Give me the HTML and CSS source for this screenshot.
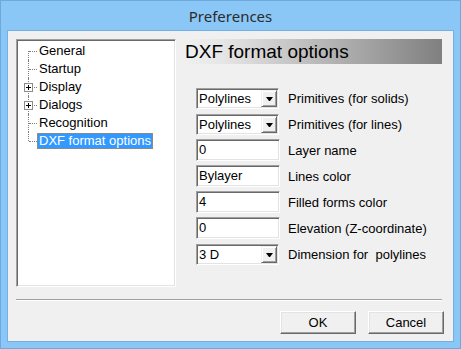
FILE: index.html
```html
<!DOCTYPE html>
<html>
<head>
<meta charset="utf-8">
<title>Preferences</title>
<link rel="stylesheet" href="styles.css">
</head>
<body>
<div class="window">
  <div class="titlebar">Preferences</div>
  <div class="client">
    <div class="main">
      <div class="tree">
        <ul>
          <li class="first"><span class="label">General</span></li>
          <li><span class="label">Startup</span></li>
          <li><span class="expander"></span><span class="label">Display</span></li>
          <li><span class="expander"></span><span class="label">Dialogs</span></li>
          <li><span class="label">Recognition</span></li>
          <li class="last"><span class="label selected">DXF format options</span></li>
        </ul>
      </div>
      <div class="panel">
        <div class="header">DXF format options</div>
        <div class="form">
          <div class="row">
            <div class="control"><div class="combo"><span class="value">Polylines</span><span class="drop"></span></div></div>
            <span class="caption">Primitives (for solids)</span>
          </div>
          <div class="row">
            <div class="control"><div class="combo"><span class="value">Polylines</span><span class="drop"></span></div></div>
            <span class="caption">Primitives (for lines)</span>
          </div>
          <div class="row">
            <div class="control"><div class="field">0</div></div>
            <span class="caption">Layer name</span>
          </div>
          <div class="row">
            <div class="control"><div class="field">Bylayer</div></div>
            <span class="caption">Lines color</span>
          </div>
          <div class="row">
            <div class="control"><div class="field">4</div></div>
            <span class="caption">Filled forms color</span>
          </div>
          <div class="row">
            <div class="control"><div class="field">0</div></div>
            <span class="caption">Elevation (Z-coordinate)</span>
          </div>
          <div class="row">
            <div class="control"><div class="combo"><span class="value">3 D</span><span class="drop"></span></div></div>
            <span class="caption">Dimension for&nbsp; polylines</span>
          </div>
        </div>
      </div>
    </div>
    <div class="separator"></div>
    <div class="buttons">
      <button class="btn">OK</button>
      <button class="btn">Cancel</button>
    </div>
  </div>
</div>
</body>
</html>
```

FILE: styles.css
```css
html, body {
  margin: 0;
  padding: 0;
}
body {
  width: 461px;
  height: 349px;
  overflow: hidden;
  background: #8ac7f7;
  font-family: "Liberation Sans", Arial, sans-serif;
  font-size: 13px;
  color: #000;
}
.window {
  box-sizing: border-box;
  width: 461px;
  height: 349px;
  border: 1px solid #6fa8dc;
  display: flex;
  flex-direction: column;
}
.titlebar {
  height: 29px;
  display: flex;
  align-items: center;
  justify-content: center;
  font-family: "Noto Sans", "Open Sans", sans-serif;
  font-size: 15px;
  color: #2b2b2b;
}
.client {
  flex: 1;
  margin: 0 6px 6px 6px;
  border: 1px solid #74b0e6;
  background: #f0f0f0;
  display: flex;
  flex-direction: column;
  padding: 8px 9px 0 8px;
}
.main {
  display: flex;
  gap: 7px;
}
.tree {
  box-sizing: border-box;
  width: 160px;
  height: 248px;
  background: #fff;
  border: 1px solid;
  border-color: #a0a0a0 #fff #fff #a0a0a0;
  box-shadow: inset 1px 1px #696969, inset -1px -1px #e3e3e3;
}
.tree ul {
  list-style: none;
  margin: 0;
  padding: 2px 0 0 0;
}
.tree li {
  position: relative;
  height: 18px;
  padding-left: 20px;
}
.tree li::before {
  content: "";
  position: absolute;
  left: 11px;
  top: 0;
  height: 18px;
  border-left: 1px dotted #808080;
}
.tree li.first::before {
  top: 9px;
  height: 9px;
}
.tree li.last::before {
  height: 9px;
}
.tree li::after {
  content: "";
  position: absolute;
  left: 12px;
  top: 9px;
  width: 8px;
  border-top: 1px dotted #808080;
}
.expander {
  position: absolute;
  left: 7px;
  top: 5px;
  box-sizing: border-box;
  width: 9px;
  height: 9px;
  border: 1px solid #8c8c8c;
  background: #fff;
  z-index: 1;
}
.expander::before {
  content: "";
  position: absolute;
  left: 1px;
  top: 3px;
  width: 5px;
  height: 1px;
  background: #000;
}
.expander::after {
  content: "";
  position: absolute;
  left: 3px;
  top: 1px;
  width: 1px;
  height: 5px;
  background: #000;
}
.label {
  display: inline-block;
  height: 16px;
  line-height: 16px;
  margin-top: 1px;
  padding: 0 2px;
  white-space: nowrap;
}
.label.selected {
  background: #3399ff;
  color: #fff;
  outline: 1px dotted #d08020;
  outline-offset: -1px;
}
.panel {
  width: 259px;
  display: flex;
  flex-direction: column;
}
.header {
  height: 25px;
  line-height: 25px;
  padding-left: 2px;
  font-size: 19px;
  background: linear-gradient(to right, #f0f0f0, #e6e6e6 15%, #808080);
}
.form {
  margin-top: 23px;
  padding-left: 13px;
  display: flex;
  flex-direction: column;
  gap: 4px;
}
.row {
  display: flex;
  align-items: center;
  height: 22px;
}
.control {
  width: 92px;
  flex: none;
}
.field, .combo {
  box-sizing: border-box;
  height: 22px;
  background: #fff;
  border: 1px solid;
  border-color: #a0a0a0 #fff #fff #a0a0a0;
  box-shadow: inset 1px 1px #696969, inset -1px -1px #e3e3e3;
}
.field {
  width: 84px;
  padding-left: 2px;
  line-height: 20px;
}
.combo {
  width: 83px;
  height: 21px;
  display: flex;
  align-items: stretch;
  padding: 1px;
}
.combo .value {
  flex: 1;
  padding-left: 1px;
  line-height: 17px;
}
.drop {
  box-sizing: border-box;
  width: 16px;
  background: #f0f0f0;
  border: 1px solid;
  border-color: #f0f0f0 #696969 #696969 #f0f0f0;
  box-shadow: inset 1px 1px #fff, inset -1px -1px #a0a0a0;
  display: flex;
  align-items: center;
  justify-content: center;
}
.drop::after {
  content: "";
  width: 1px;
  height: 0;
  border-left: 3px solid transparent;
  border-right: 3px solid transparent;
  border-top: 4px solid #000;
  margin-top: 1px;
}
.caption {
  white-space: nowrap;
}
.separator {
  margin-top: 12px;
  margin-right: 2px;
  border-top: 1px solid #a0a0a0;
  border-bottom: 1px solid #fff;
}
.buttons {
  margin-top: 10px;
  display: flex;
  justify-content: flex-end;
  gap: 12px;
}
.btn {
  box-sizing: border-box;
  width: 76px;
  height: 23px;
  padding: 0;
  font-family: "Liberation Sans", Arial, sans-serif;
  font-size: 13px;
  color: #000;
  background: #f0f0f0;
  border: 1px solid;
  border-color: #fff #696969 #696969 #fff;
  box-shadow: inset -1px -1px #a0a0a0, inset 1px 1px #e3e3e3;
}
```
